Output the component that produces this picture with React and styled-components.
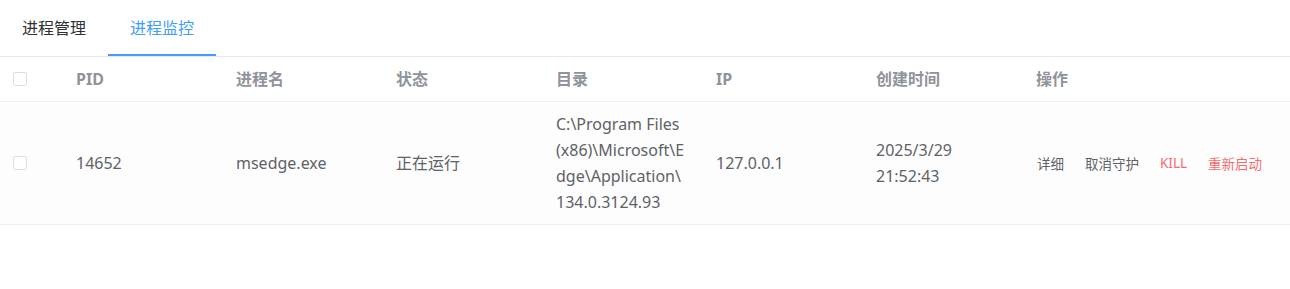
import React from 'react'
import styled, { createGlobalStyle } from 'styled-components'

const GlobalStyle = createGlobalStyle`
  body {
    margin: 0;
    background: #fff;
    font-family: "Noto Sans", "Noto Sans CJK SC", sans-serif;
  }
`

const Tabs = styled.div`
  display: flex;
  height: 56px;
  border-bottom: 1px solid #e4e7ed;
`

const Tab = styled.div`
  position: relative;
  padding: 0 22px;
  line-height: 56px;
  font-size: 16px;
  color: ${p => (p.$active ? '#409eff' : '#303133')};
  cursor: pointer;
  &::after {
    content: '';
    position: absolute;
    left: 0;
    right: 0;
    bottom: 0;
    height: 2px;
    background: ${p => (p.$active ? '#409eff' : 'transparent')};
  }
`

const Row = styled.div`
  display: grid;
  grid-template-columns: 60px repeat(6, 160px) 1fr;
  align-items: center;
  border-bottom: 1px solid #ebeef5;
  background: ${p => (p.$head ? '#fff' : '#fdfdfe')};
  min-height: ${p => (p.$head ? '44px' : 'auto')};
`

const Cell = styled.div`
  padding: ${p => (p.$head ? '0 16px' : '9px 16px')};
  font-size: 16px;
  line-height: 26px;
  color: ${p => (p.$head ? '#909399' : '#606266')};
  font-weight: ${p => (p.$head ? 700 : 400)};
`

const Line = styled.span`
  display: block;
  white-space: nowrap;
`

const CheckCell = styled.div`
  padding-left: 13px;
  display: flex;
  align-items: center;
`

const Checkbox = styled.span`
  display: inline-block;
  width: 14px;
  height: 14px;
  box-sizing: border-box;
  border: 1px solid #dcdfe6;
  border-radius: 2px;
  background: #fff;
`

const Actions = styled.div`
  display: flex;
  align-items: center;
  gap: 21px;
  padding-left: 17px;
`

const ActionBtn = styled.span`
  font-size: 13.5px;
  color: ${p => (p.$danger ? '#f56c6c' : '#606266')};
  cursor: pointer;
`

const columns = ['PID', '进程名', '状态', '目录', 'IP', '创建时间', '操作']

// path is kept in the wrapped pieces the column shows
const processes = [
  {
    pid: 14652,
    name: 'msedge.exe',
    status: '正在运行',
    dir: ['C:\\Program Files', '(x86)\\Microsoft\\E', 'dge\\Application\\', '134.0.3124.93'],
    ip: '127.0.0.1',
    created: ['2025/3/29', '21:52:43'],
  },
]

export default function App() {
  return (
    <>
      <GlobalStyle />
      <Tabs>
        <Tab>进程管理</Tab>
        <Tab $active>进程监控</Tab>
      </Tabs>
      <Row $head>
        <CheckCell><Checkbox /></CheckCell>
        {columns.map(c => (
          <Cell $head key={c}>{c}</Cell>
        ))}
      </Row>
      {processes.map(p => (
        <Row key={p.pid}>
          <CheckCell><Checkbox /></CheckCell>
          <Cell>{p.pid}</Cell>
          <Cell>{p.name}</Cell>
          <Cell>{p.status}</Cell>
          <Cell>
            {p.dir.map(l => <Line key={l}>{l}</Line>)}
          </Cell>
          <Cell>{p.ip}</Cell>
          <Cell>
            {p.created.map(l => <Line key={l}>{l}</Line>)}
          </Cell>
          <Actions>
            <ActionBtn>详细</ActionBtn>
            <ActionBtn>取消守护</ActionBtn>
            <ActionBtn $danger>KILL</ActionBtn>
            <ActionBtn $danger>重新启动</ActionBtn>
          </Actions>
        </Row>
      ))}
    </>
  )
}
